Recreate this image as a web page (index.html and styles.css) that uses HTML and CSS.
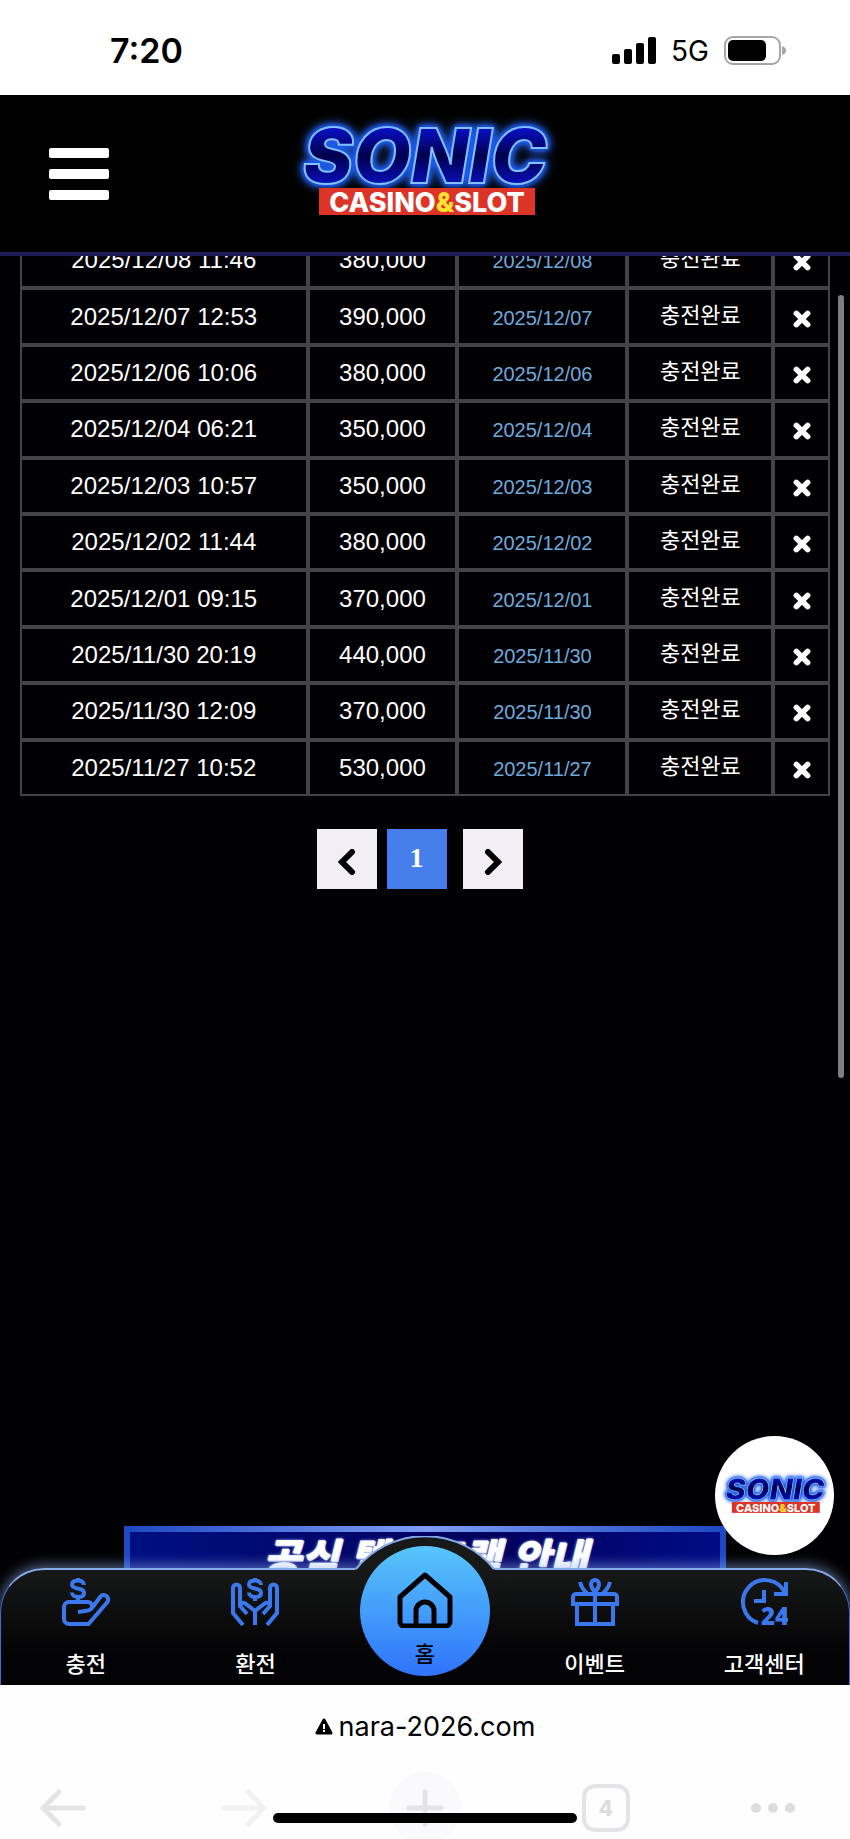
FILE: index.html
```html
<!DOCTYPE html>
<html lang="ko">
<head>
    <meta charset="UTF-8">
    <meta name="viewport" content="width=device-width, initial-scale=1">
    <title>SONIC CASINO&amp;SLOT</title>
    <link rel="stylesheet" href="styles.css">
</head>
<body>
    <!-- shared symbols -->
    <svg class="symbols" aria-hidden="true">
        <defs>
            <linearGradient id="wordFill" x1="0" y1="0" x2="0" y2="1">
                <stop offset="0.15" stop-color="#0a12d8"/>
                <stop offset="0.5" stop-color="#00004c"/>
                <stop offset="0.85" stop-color="#0a10c4"/>
            </linearGradient>
        </defs>
        <symbol id="cross" viewBox="0 0 16 16">
            <path d="M3 3l10 10M13 3L3 13" fill="none" stroke="#fff" stroke-width="5" stroke-linecap="round"/>
        </symbol>
        <symbol id="dollar" viewBox="0 0 16 24">
            <path d="M14 7c0-3-3-4.500-6-4.500s-6 1-6 4 3 3.500 6 4 6 1.500 6 4.500-3 4-6 4-6-1.500-6-4.500M8 0v3M8 19v4" fill="none" stroke="#3b78ee" stroke-width="4"/>
        </symbol>
    </svg>

    <div class="status-bar">
        <span class="clock">7:20</span>
        <div class="status-icons">
            <svg width="44" height="28" viewBox="0 0 44 28">
                <rect x="0" y="17" width="8" height="10" rx="2"/>
                <rect x="12" y="12" width="8" height="15" rx="2"/>
                <rect x="24" y="6" width="8" height="21" rx="2"/>
                <rect x="36" y="0" width="8" height="27" rx="2"/>
            </svg>
            <span class="network">5G</span>
            <svg width="62" height="30" viewBox="0 0 62 30">
                <rect x="1" y="1" width="55" height="27" rx="8" fill="none" stroke="#a6a6a6" stroke-width="2"/>
                <rect x="4" y="4" width="38" height="21" rx="5"/>
                <path d="M58 10q4 1 4 4.500t-4 4.500z" fill="#a6a6a6"/>
            </svg>
        </div>
    </div>

    <header class="site-header">
        <button class="menu-button" type="button" aria-label="메뉴">
            <span></span><span></span><span></span>
        </button>
        <a class="logo-link" href="#" aria-label="SONIC CASINO&amp;SLOT">
            <svg class="logo" width="290" height="127" viewBox="0 0 290 127">
                <text class="logo-word" x="145" y="73">SONIC</text>
                <rect x="39" y="78" width="216" height="27"/>
                <text class="logo-sub" x="147" y="102">CASINO<tspan>&amp;</tspan>SLOT</text>
            </svg>
        </a>
    </header>

    <main class="content">
        <table class="history">
            <colgroup>
                <col class="col-requested"><col class="col-amount"><col class="col-done"><col class="col-state"><col class="col-remove">
            </colgroup>
            <tbody>
                <tr><td>2025/12/08 11:46</td><td>380,000</td><td class="done">2025/12/08</td><td class="state">충전완료</td><td><button class="remove" type="button" aria-label="삭제"><svg><use href="#cross"/></svg></button></td></tr>
                <tr><td>2025/12/07 12:53</td><td>390,000</td><td class="done">2025/12/07</td><td class="state">충전완료</td><td><button class="remove" type="button" aria-label="삭제"><svg><use href="#cross"/></svg></button></td></tr>
                <tr><td>2025/12/06 10:06</td><td>380,000</td><td class="done">2025/12/06</td><td class="state">충전완료</td><td><button class="remove" type="button" aria-label="삭제"><svg><use href="#cross"/></svg></button></td></tr>
                <tr><td>2025/12/04 06:21</td><td>350,000</td><td class="done">2025/12/04</td><td class="state">충전완료</td><td><button class="remove" type="button" aria-label="삭제"><svg><use href="#cross"/></svg></button></td></tr>
                <tr><td>2025/12/03 10:57</td><td>350,000</td><td class="done">2025/12/03</td><td class="state">충전완료</td><td><button class="remove" type="button" aria-label="삭제"><svg><use href="#cross"/></svg></button></td></tr>
                <tr><td>2025/12/02 11:44</td><td>380,000</td><td class="done">2025/12/02</td><td class="state">충전완료</td><td><button class="remove" type="button" aria-label="삭제"><svg><use href="#cross"/></svg></button></td></tr>
                <tr><td>2025/12/01 09:15</td><td>370,000</td><td class="done">2025/12/01</td><td class="state">충전완료</td><td><button class="remove" type="button" aria-label="삭제"><svg><use href="#cross"/></svg></button></td></tr>
                <tr><td>2025/11/30 20:19</td><td>440,000</td><td class="done">2025/11/30</td><td class="state">충전완료</td><td><button class="remove" type="button" aria-label="삭제"><svg><use href="#cross"/></svg></button></td></tr>
                <tr><td>2025/11/30 12:09</td><td>370,000</td><td class="done">2025/11/30</td><td class="state">충전완료</td><td><button class="remove" type="button" aria-label="삭제"><svg><use href="#cross"/></svg></button></td></tr>
                <tr><td>2025/11/27 10:52</td><td>530,000</td><td class="done">2025/11/27</td><td class="state">충전완료</td><td><button class="remove" type="button" aria-label="삭제"><svg><use href="#cross"/></svg></button></td></tr>
            </tbody>
        </table>

        <nav class="pagination" aria-label="페이지">
            <button type="button" aria-label="이전">
                <svg width="18" height="26" viewBox="0 0 18 26"><path d="M14 3L4 13l10 10"/></svg>
            </button>
            <button type="button" class="current">1</button>
            <button type="button" class="next" aria-label="다음">
                <svg width="18" height="26" viewBox="0 0 18 26"><path d="M4 3l10 10L4 23"/></svg>
            </button>
        </nav>

        <a class="banner" href="#">공식 텔레그램 안내</a>

        <a class="chat-badge" href="#" aria-label="SONIC CASINO&amp;SLOT">
            <svg class="logo" width="118" height="52" viewBox="0 0 290 127">
                <text class="logo-word" x="145" y="73">SONIC</text>
                <rect x="39" y="78" width="216" height="27"/>
                <text class="logo-sub" x="147" y="102">CASINO<tspan>&amp;</tspan>SLOT</text>
            </svg>
        </a>
        <div class="scroll-thumb"></div>
    </main>

    <nav class="tab-bar">
        <svg class="bump" width="140" height="34" viewBox="0 0 140 34">
            <path d="M0 34A89 89 0 0 1 140 34" fill="#171919"/>
            <path d="M1 33A89 89 0 0 1 139 33" fill="none" stroke="#86a9ea" stroke-width="2"/>
        </svg>
        <a href="#">
            <svg class="icon" viewBox="0 0 48 48">
                <use href="#dollar" x="8" y="0" width="16" height="24"/>
                <path d="M30 31v-3a4 4 0 0 0-4-4H7a5 5 0 0 0-5 5v12a5 5 0 0 0 5 5h19.500L45 24.500a4 4 0 0 0-6.500-6L30 30q-1.500 2-4 2.500l-10 1.500"/>
            </svg>
            <span>충전</span>
        </a>
        <a href="#">
            <svg class="icon" viewBox="0 0 48 48">
                <use href="#dollar" x="16" y="0" width="16" height="24"/>
                <path d="M12 47L2 35V10a3.500 3.500 0 0 1 7 0v18l7 8M9 27q3-4 6-1l9 7v14M36 47l10-12V10a3.500 3.500 0 0 0-7 0v18l-7 8M39 27q-3-4-6-1l-9 7"/>
            </svg>
            <span>환전</span>
        </a>
        <a href="#" class="home">
            <svg width="56" height="56" viewBox="0 0 56 56">
                <path d="M28 3L3 25v25a4 4 0 0 0 4 4h42a4 4 0 0 0 4-4V25zM19 54V39a9 9 0 0 1 18 0v15"/>
            </svg>
            <span>홈</span>
        </a>
        <a href="#">
            <svg class="icon" viewBox="0 0 48 48">
                <path d="M5 16h38a3 3 0 0 1 3 3v7H2v-7a3 3 0 0 1 3-3zM6 26v20h36V26M24 16v30M24 14c-3-3-4-5-4-8a4 4 0 0 1 8 0c0 3-1 5-4 8zM9 4c1 4 3 8 7 11M39 4c-1 4-3 8-7 11"/>
            </svg>
            <span>이벤트</span>
        </a>
        <a href="#">
            <svg class="icon" viewBox="0 0 48 48">
                <path d="M18 45A22 22 0 1 1 45 15M46 4v12H34M24 12v11H14"/>
                <text x="21" y="47">24</text>
            </svg>
            <span>고객센터</span>
        </a>
    </nav>

    <footer class="browser">
        <div class="address">
            <svg width="18" height="18" viewBox="0 0 18 18">
                <path d="M9 2L2 15h14z" stroke="#000" stroke-width="3" stroke-linejoin="round"/>
                <path d="M9 6v5M9 12v2" stroke="#fff" stroke-width="2"/>
            </svg>
            <span>nara-2026.com</span>
        </div>
        <div class="toolbar">
            <button type="button" class="back" aria-label="뒤로">
                <svg width="46" height="38" viewBox="0 0 46 38"><path d="M43 19H3M19 3L3 19l16 16"/></svg>
            </button>
            <button type="button" class="forward" aria-label="앞으로">
                <svg width="46" height="38" viewBox="0 0 46 38"><path d="M3 19h40M27 3l16 16-16 16"/></svg>
            </button>
            <button type="button" class="add" aria-label="새 탭">
                <svg width="38" height="38" viewBox="0 0 38 38"><path d="M19 3v32M3 19h32"/></svg>
            </button>
            <button type="button" class="tabs">4</button>
            <button type="button" class="more" aria-label="더보기"><i></i><i></i><i></i></button>
        </div>
        <div class="home-indicator"></div>
    </footer>
</body>
</html>
```
FILE: styles.css
```css
* { box-sizing: border-box; }

body {
    margin: 0;
    min-height: 100vh;
    display: flex;
    flex-direction: column;
    background-color: #010003;
    color: #fff;
    font-family: "Liberation Sans", "Noto Sans CJK KR", sans-serif;
}

a { color: inherit; text-decoration: none; }
button { padding: 0; border: 0; background: none; color: inherit; font: inherit; }
svg { display: block; }
.symbols { position: absolute; width: 0; height: 0; }

/* phone status bar */
.status-bar {
    display: flex;
    justify-content: space-between;
    align-items: center;
    height: 95px;
    padding: 6px 64px 0 110px;
    background-color: #fff;
    color: #000;
    font-family: Inter, sans-serif;
}
.clock { font-size: 34px; font-weight: 600; }
.status-icons { display: flex; align-items: center; gap: 15px; }
.network { font-size: 28px; }

/* header */
.site-header {
    position: relative;
    z-index: 2;
    display: grid;
    grid-template-columns: 1fr auto 1fr;
    align-items: center;
    padding: 15px 49px;
    border-bottom: 4px solid #1c1e58;
    background-color: #000;
}
.menu-button { display: flex; flex-direction: column; gap: 11px; width: 60px; }
.menu-button span { height: 10px; border-radius: 2px; background-color: #fff; }

/* logo */
.logo { overflow: visible; }
.logo text { text-anchor: middle; }
.logo rect { fill: #dc3527; }
.logo-word {
    font: italic 900 75px Inter, sans-serif;
    fill: url(#wordFill);
    stroke: #7fc0ff;
    stroke-width: 2px;
    filter: drop-shadow(0 0 2px #1c55e8) drop-shadow(0 0 2px #1c55e8) drop-shadow(0 0 5px #2b6cff);
}
.logo-sub { font: 800 27px Inter, sans-serif; fill: #fff; }
.logo-sub tspan { fill: #ffe232; }

/* history table, scrolled partly under the header */
.content {
    position: relative;
    flex: 1;
    display: flex;
    flex-direction: column;
    padding: 0 20px;
}
.history {
    width: 100%;
    height: 564px;
    margin-top: -24px;
    table-layout: fixed;
    border-collapse: separate;
    border-spacing: 0;
}
.col-requested { width: 35.5%; }
.col-amount { width: 18.5%; }
.col-done { width: 21%; }
.col-state { width: 18%; }
.col-remove { width: 7%; }
td { padding: 0; border: 2px solid #444346; text-align: center; font-size: 24px; line-height: 28px; }
.done { padding-top: 2px; color: #6ea9dc; font-size: 20px; }
.state { padding-bottom: 2px; font-size: 22px; }
.remove { display: block; margin: 0 auto; padding-top: 4px; }
.remove svg { width: 18px; height: 18px; }

/* pagination */
.pagination { display: flex; justify-content: center; gap: 10px; margin: 33px 11px 24px 0; }
.pagination button {
    display: flex;
    align-items: center;
    justify-content: center;
    width: 60px;
    height: 60px;
    padding-top: 6px;
    background-color: #f1eff3;
}
.pagination path { fill: none; stroke: #000; stroke-width: 6px; stroke-linecap: round; }
.pagination .current {
    padding: 0 0 2px;
    background-color: #467fec;
    font: bold 28px "Liberation Serif", serif;
}
.pagination .next { margin-left: 6px; }

.banner {
    height: 42px;
    margin: auto 104px 0;
    padding-top: 4px;
    overflow: hidden;
    border: 6px solid #1f49c4;
    border-bottom: 0;
    border-image: linear-gradient(90deg, #1f49c4, #7f9df5 50%, #1f49c4) 1;
    background: linear-gradient(90deg, #000f80, #00005c 60%, #000c84);
    text-align: center;
    font-size: 41px;
    line-height: 46px;
    font-style: italic;
    font-weight: 900;
    text-shadow: 0 0 3px #9fb4ff, 1px 1px 0 #fff;
    white-space: nowrap;
}

.chat-badge {
    position: absolute;
    right: 16px;
    bottom: 13px;
    z-index: 3;
    display: flex;
    align-items: center;
    justify-content: center;
    width: 119px;
    height: 119px;
    border-radius: 50%;
    background-color: #fff;
}
.scroll-thumb {
    position: absolute;
    top: 39px;
    right: 6px;
    width: 6px;
    height: 783px;
    border-radius: 3px;
    background-color: #7e7d80;
}

/* bottom tabs */
.tab-bar {
    position: relative;
    z-index: 1;
    display: grid;
    grid-template-columns: repeat(5, 1fr);
    height: 117px;
    border: solid #3f6fc9;
    border-width: 2px 1px 0;
    border-top-color: #86a9ea;
    border-radius: 44px 44px 0 0;
    background: linear-gradient(#171919, #030204 75%);
    box-shadow: 0 -2px 14px rgba(150, 180, 240, 0.6);
}
.bump { position: absolute; top: -34px; left: 50%; transform: translateX(-50%); }
.tab-bar a {
    display: flex;
    flex-direction: column;
    align-items: center;
    gap: 20px;
    padding-top: 8px;
    font: 500 22px/32px "Noto Sans CJK KR", sans-serif;
}
.icon { width: 48px; height: 48px; fill: none; stroke: #3b78ee; stroke-width: 4px; }
.icon text { fill: #3b78ee; stroke: none; font: 800 24px "Open Sans", sans-serif; }
.tab-bar .home {
    position: relative;
    justify-self: center;
    width: 130px;
    height: 130px;
    margin-top: -24px;
    padding-top: 26px;
    gap: 8px;
    border-radius: 50%;
    background: linear-gradient(#58c6fb, #2f73fb);
    color: #000;
}
.home path { fill: none; stroke: #000; stroke-width: 5px; stroke-linejoin: round; }

/* browser footer */
.browser {
    position: relative;
    z-index: 2;
    height: 154px;
    padding-top: 24px;
    background-color: #fefdff;
    color: #000;
    font-family: Inter, sans-serif;
}
.address {
    display: flex;
    align-items: center;
    justify-content: center;
    gap: 6px;
    font-size: 27px;
    line-height: 36px;
}
.toolbar {
    display: grid;
    grid-template-columns: 154px repeat(3, 1fr) 154px;
    align-items: center;
    justify-items: center;
    margin-top: 27px;
}
.toolbar path { fill: none; stroke: #e4e3e6; stroke-width: 5px; stroke-linecap: round; stroke-linejoin: round; }
.toolbar .back { justify-self: start; margin-left: 40px; }
.toolbar .forward path { stroke: #f2f1f4; }
.add {
    display: flex;
    align-items: center;
    justify-content: center;
    width: 72px;
    height: 72px;
    border-radius: 50%;
    background-color: #faf9fc;
}
.tabs {
    width: 48px;
    height: 48px;
    border: 4px solid #e4e3e6;
    border-radius: 13px;
    color: #dcdbde;
    font-size: 22px;
    font-weight: 700;
}
.more { display: flex; gap: 7px; }
.more i { width: 10px; height: 10px; border-radius: 50%; background-color: #dddce0; }
.home-indicator {
    position: absolute;
    left: 50%;
    bottom: 16px;
    width: 304px;
    height: 10px;
    border-radius: 5px;
    background-color: #000;
    transform: translateX(-50%);
}
```
